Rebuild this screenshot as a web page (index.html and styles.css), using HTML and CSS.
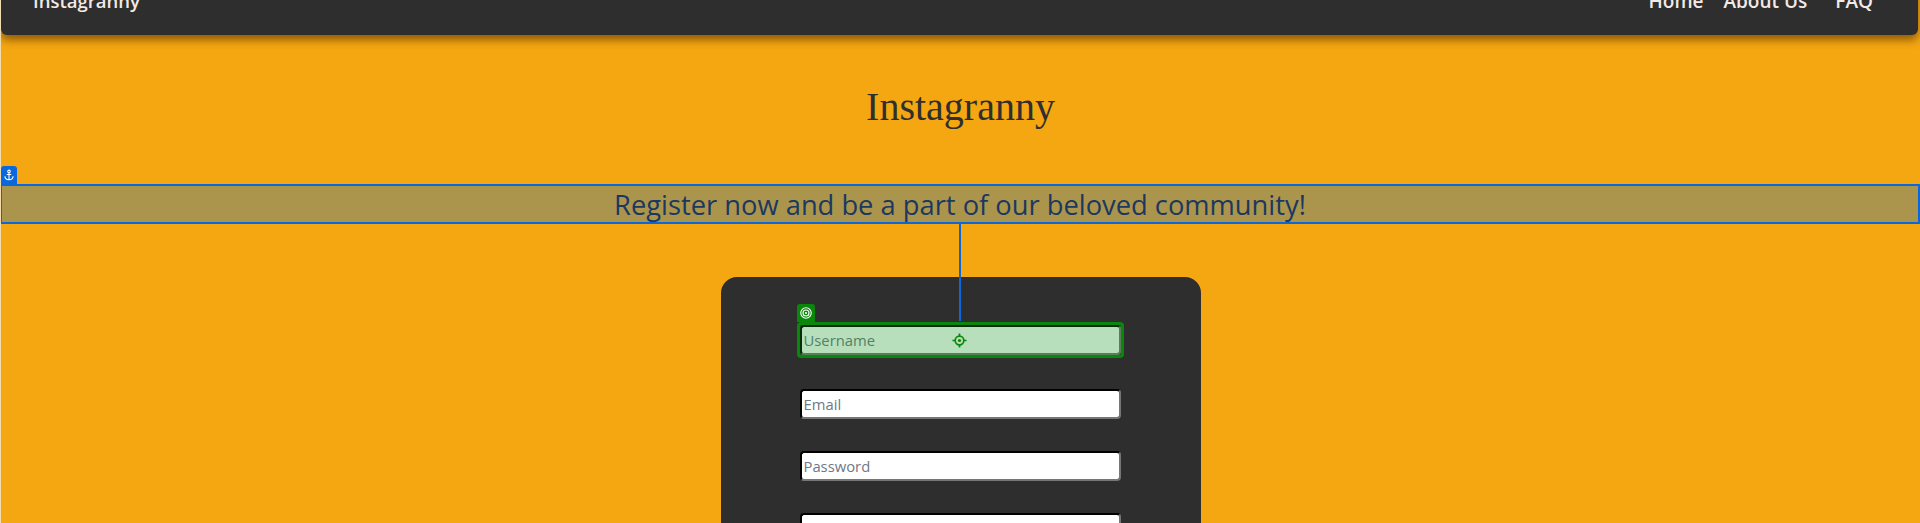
FILE: index.html
```
<!DOCTYPE html>
<html lang="en">
<head>
<meta charset="utf-8">
<title>Instagranny - Register</title>
<link rel="stylesheet" href="styles.css">
</head>
<body>
<nav class="navbar">
  <a class="brand" href="#">Instagranny</a>
  <div class="nav-links">
    <a href="#">Home</a>
    <a href="#">About Us</a>
    <a href="#" class="faq">FAQ</a>
  </div>
</nav>
<main class="main">
  <h1 class="title">Instagranny</h1>
  <div class="banner-wrap">
    <span class="anchor-badge"><svg viewBox="0 0 16 16" width="12" height="12"><circle cx="8" cy="3.2" r="1.7" fill="none" stroke="#fff" stroke-width="1.4"/><path d="M8 4.9V14.2M5 7.3h6M2.6 9.6c0 2.9 2.5 4.6 5.4 4.6s5.4-1.7 5.4-4.6" fill="none" stroke="#fff" stroke-width="1.4"/></svg></span>
    <h2 class="banner">Register now and be a part of our beloved community!</h2>
  </div>
  <span class="connector"></span>
  <section class="card">
    <form class="form">
      <div class="field field-selected">
        <input type="text" placeholder="Username">
        <span class="select-box"></span>
        <span class="select-badge"><svg viewBox="0 0 16 16" width="14" height="14"><circle cx="8" cy="8" r="6" fill="none" stroke="#fff" stroke-width="1.3"/><circle cx="8" cy="8" r="3.4" fill="none" stroke="#fff" stroke-width="1.3"/><circle cx="8" cy="8" r="1.2" fill="#fff"/></svg></span>
        <span class="crosshair"><svg viewBox="0 0 16 16" width="15" height="15"><circle cx="8" cy="8" r="4.6" fill="none" stroke="#0a870a" stroke-width="1.8"/><circle cx="8" cy="8" r="1.7" fill="#0a870a"/><path d="M8 0.5v3M8 12.5v3M0.5 8h3M12.5 8h3" stroke="#0a870a" stroke-width="1.8"/></svg></span>
      </div>
      <div class="field"><input type="email" placeholder="Email"></div>
      <div class="field"><input type="password" placeholder="Password"></div>
      <div class="field"><input type="password" placeholder="Confirm Password"></div>
      <div class="field"><button type="submit" class="submit">Register</button></div>
    </form>
  </section>
</main>
</body>
</html>
```
FILE: styles.css
```
html, body {
  margin: 0;
  padding: 0;
}
body {
  background: #f5a711;
  font-family: "Open Sans", "Noto Sans", sans-serif;
  overflow: hidden;
  height: 523px;
  border-left: 1px solid #f3dcb0;
}
.navbar {
  height: 60px;
  margin: -25px 2px 0 0;
  background: #2e2e2e;
  border-radius: 0 0 6px 6px;
  box-shadow: 0 5px 8px rgba(60, 30, 0, 0.55);
  display: flex;
  align-items: flex-start;
  justify-content: space-between;
  padding: 14px 45px 0 32px;
  box-sizing: border-box;
  position: relative;
  z-index: 2;
}
.navbar a {
  color: #f3e9e6;
  text-decoration: none;
  font-weight: 600;
  font-size: 19px;
  line-height: 24px;
}
.navbar .brand {
  font-size: 18.5px;
}
.nav-links {
  display: flex;
  gap: 20px;
}
.nav-links .faq {
  margin-left: 8px;
}
.main {
  position: relative;
}
.title {
  margin: 49px 0 0;
  font-family: "Liberation Serif", "Times New Roman", serif;
  font-weight: normal;
  font-size: 40px;
  line-height: 46px;
  text-align: center;
  color: #2f2f2f;
}
.banner-wrap {
  position: relative;
  margin-top: 54px;
}
.banner {
  margin: 0;
  height: 40px;
  box-sizing: border-box;
  background: #ab954d;
  border: 2px solid #0b68dc;
  border-left-width: 1px;
  color: #1c3860;
  font-weight: 500;
  font-size: 27.3px;
  line-height: 38px;
  text-align: center;
  white-space: nowrap;
  overflow: hidden;
}
.anchor-badge {
  position: absolute;
  left: 0;
  top: -18px;
  width: 16px;
  height: 18px;
  background: #0b68dc;
  border-radius: 3px 3px 0 0;
  display: flex;
  align-items: center;
  justify-content: center;
}
.anchor-badge svg {
  display: block;
}
.connector {
  position: absolute;
  left: 958px;
  top: 139px;
  width: 2px;
  height: 98px;
  background: #0b68dc;
  z-index: 3;
}
.card {
  width: 480px;
  min-height: 320px;
  margin: 53px auto 0;
  background: #2e2e2e;
  border-radius: 16px 16px 0 0;
  box-sizing: border-box;
  padding: 48px 79px 0;
}
.form {
  display: flex;
  flex-direction: column;
  gap: 32px;
}
.field {
  position: relative;
  height: 30px;
}
.field-selected {
  margin-bottom: 2px;
}
.field input {
  display: block;
  width: 321px;
  height: 30px;
  box-sizing: border-box;
  margin: 0;
  border: 2px inset #767676;
  border-top-color: #1c1c1c;
  border-left-color: #1c1c1c;
  border-radius: 4px;
  padding: 0 2px;
  background: #fff;
  font-family: "Open Sans", "Noto Sans", sans-serif;
  font-size: 14.8px;
  color: #222;
}
.field input::placeholder {
  color: #6f7888;
}
.select-box {
  position: absolute;
  left: -3px;
  top: -3px;
  width: 327px;
  height: 36px;
  box-sizing: border-box;
  border: 3px solid #0a870a;
  border-radius: 4px;
  background: rgba(20, 150, 30, 0.3);
}
.select-badge {
  position: absolute;
  left: -3px;
  top: -21px;
  width: 18px;
  height: 18px;
  background: #0a870a;
  border-radius: 3px 3px 0 0;
  display: flex;
  align-items: center;
  justify-content: center;
}
.select-badge svg, .crosshair svg {
  display: block;
}
.crosshair {
  position: absolute;
  left: 152px;
  top: 8px;
}
.submit {
  width: 321px;
  height: 30px;
}
```
